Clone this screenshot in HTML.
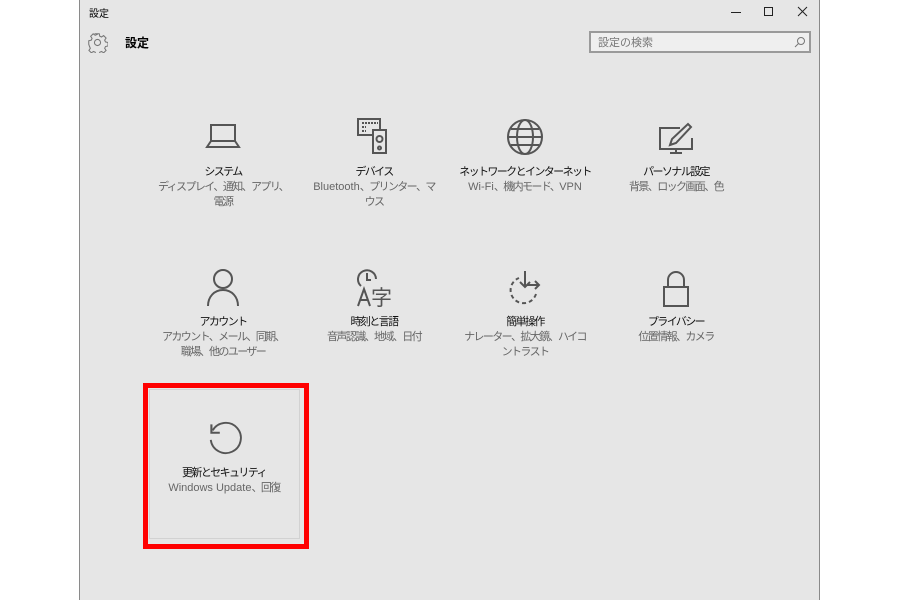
<!DOCTYPE html>
<html><head><meta charset="utf-8"><style>
body{margin:0;width:900px;height:600px;background:#fff;position:relative;overflow:hidden;font-family:"Liberation Sans","Noto Sans CJK JP",sans-serif}
.win{position:absolute;left:79px;top:0;width:741px;height:600px;background:#e6e6e6;border-left:1px solid #8a8a8a;border-right:1px solid #8a8a8a;box-sizing:border-box}
.a{position:absolute}
.tile{position:absolute;width:160px;text-align:center;font-size:11px;line-height:15px;letter-spacing:-1.6px}
.tile svg{display:block;margin:0 auto}
.t{color:#111;margin-top:7px;font-weight:normal}
.s{color:#666}
.l{letter-spacing:0}
</style></head><body>
<div class="win"></div>
<div class="a" style="left:89px;top:5px;font-size:10px;color:#000">設定</div>
<svg class="a" style="left:728px;top:4px" width="90" height="16"><line x1="3" y1="8.5" x2="13" y2="8.5" stroke="#222"/><rect x="36.5" y="3.5" width="8" height="8" fill="none" stroke="#222"/><path d="M70 3L79 12M79 3L70 12" stroke="#222"/></svg>
<svg class="a" style="left:87px;top:32px" width="21" height="21" viewBox="0 0 24 24" fill="none" stroke="#777" stroke-width="1.2"><path d="M10 2h4l.6 2.8 2 .9 2.4-1.6 2.8 2.8-1.6 2.4.9 2 2.9.7v4l-2.9.6-.9 2 1.6 2.4-2.8 2.8-2.4-1.6-2 .9-.6 2.9h-4l-.6-2.9-2-.9-2.4 1.6-2.8-2.8 1.6-2.4-.9-2L2 14v-4l2.9-.7.9-2L4.2 4.9 7 2.1l2.4 1.6 2-.9z"/><circle cx="12" cy="12" r="3.5"/></svg>
<div class="a" style="left:125px;top:34px;font-size:12px;font-weight:bold">設定</div>
<div class="a" style="left:589px;top:31px;width:222px;height:22px;box-sizing:border-box;border:2px solid #9a9a9a;background:#efefef"></div>
<div class="a" style="left:598px;top:34px;font-size:11px;color:#777">設定の検索</div>
<svg class="a" style="left:794px;top:36px" width="12" height="12"><circle cx="7" cy="5" r="3.5" fill="none" stroke="#777"/><line x1="4.5" y1="7.5" x2="1" y2="11" stroke="#777"/></svg>

<div class="tile" style="left:143px;top:118px"><svg width="40" height="40" viewBox="0 0 40 40" fill="none" stroke="#555" stroke-width="2"><rect x="8" y="7" width="24" height="16"/><path d="M8 23l-4 6h32l-4-6"/></svg><div class="t">システム</div><div class="s">ディスプレイ、通知、アプリ、<br>電源</div></div>
<div class="tile" style="left:294px;top:118px"><svg width="40" height="40" viewBox="0 0 40 40" fill="none" stroke="#555" stroke-width="2"><path d="M26 13V1H4v16h14"/><rect x="19" y="12" width="13" height="23"/><circle cx="25.5" cy="21" r="3"/><circle cx="25.5" cy="30" r="1.5"/><path d="M8 5h16M8 9h4M8 13h4" stroke-dasharray="2 1"/></svg><div class="t">デバイス</div><div class="s"><span class="l">Bluetooth</span>、プリンター、マ<br>ウス</div></div>
<div class="tile" style="left:445px;top:118px"><svg width="40" height="40" viewBox="0 0 40 40" fill="none" stroke="#555" stroke-width="2"><circle cx="20" cy="19" r="17"/><ellipse cx="20" cy="19" rx="8" ry="17"/><path d="M3 19h34M6 11h28M6 27h28"/></svg><div class="t">ネットワークとインターネット</div><div class="s"><span class="l">Wi-Fi</span>、機内モード、<span class="l">VPN</span></div></div>
<div class="tile" style="left:596px;top:118px"><svg width="40" height="40" viewBox="0 0 40 40" fill="none" stroke="#555" stroke-width="2"><path d="M24 10H4v21h32V20"/><path d="M14 35h12M20 31v4"/><path d="M14 27l2-6 16-15 3 3-15 16z"/></svg><div class="t">パーソナル設定</div><div class="s">背景、ロック画面、色</div></div>

<div class="tile" style="left:143px;top:268px"><svg width="40" height="40" viewBox="0 0 40 40" fill="none" stroke="#555" stroke-width="2"><circle cx="20" cy="11" r="9"/><path d="M5 38c0-9 6-16 15-16s15 7 15 16"/></svg><div class="t">アカウント</div><div class="s">アカウント、メール、同期、<br>職場、他のユーザー</div></div>
<div class="tile" style="left:294px;top:268px"><svg width="40" height="40" viewBox="0 0 40 40" fill="none" stroke="#555" stroke-width="2"><path d="M7 18a9 9 0 1 1 15-7"/><path d="M13 5v7h4"/><path d="M4 38l6-17 6 17M6 32h8"/><text x="17" y="37" font-size="21" fill="#555" stroke="none" font-family="Noto Sans CJK JP">字</text></svg><div class="t">時刻と言語</div><div class="s">音声認識、地域、日付</div></div>
<div class="tile" style="left:445px;top:268px"><svg width="40" height="40" viewBox="0 0 40 40" fill="none" stroke="#555" stroke-width="2"><path d="M31 26a13 13 0 1 1-17-16" stroke-dasharray="4 3"/><path d="M20 3v16M15 14l5 5 5-5M22 17h12M30 13l4 4-4 4"/></svg><div class="t">簡単操作</div><div class="s">ナレーター、拡大鏡、ハイコ<br>ントラスト</div></div>
<div class="tile" style="left:596px;top:268px"><svg width="40" height="40" viewBox="0 0 40 40" fill="none" stroke="#555" stroke-width="2"><rect x="8" y="19" width="24" height="19"/><path d="M12 19v-7a8 8 0 0 1 16 0v7"/></svg><div class="t">プライバシー</div><div class="s">位置情報、カメラ</div></div>

<div class="a" style="left:143px;top:383px;width:166px;height:166px;box-sizing:border-box;border:5px solid #f00"></div>
<div class="a" style="left:149px;top:389px;width:151px;height:150px;box-sizing:border-box;border:1px solid #d2d2d2"></div>
<div class="tile" style="left:144px;top:417px"><svg width="42" height="42" viewBox="0 0 40 40" fill="none" stroke="#555" stroke-width="2"><path d="M8 12a16 16 0 1 1-2 10" transform="translate(2,2) scale(.9)"/><path d="M8 7v8h8"/></svg><div class="t">更新とセキュリティ</div><div class="s"><span class="l">Windows Update</span>、回復</div></div>
</body></html>
